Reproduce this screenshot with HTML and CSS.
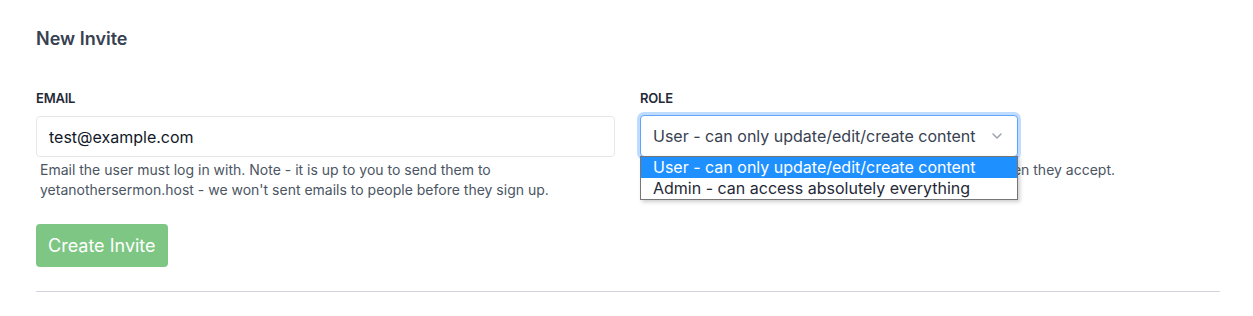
FILE: index.html
```html
<!DOCTYPE html>
<html lang="en">
<head>
  <meta charset="UTF-8">
  <meta name="viewport" content="width=device-width, initial-scale=1.0">
  <title>New Invite</title>
  <link rel="stylesheet" href="styles.css">
</head>
<body>
  <!-- Invite form -->
  <div class="panel">
    <h2 class="panel-title">New Invite</h2>
    <form class="invite-form">
      <div class="form-row">
        <div class="form-group">
          <label for="email">Email</label>
          <input type="email" id="email" name="email" value="test@example.com">
          <p class="help">Email the user must log in with. Note - it is up to you to send them to yetanothersermon.host - we won't sent emails to people before they sign up.</p>
        </div>
        <div class="form-group">
          <label for="role">Role</label>
          <div class="select-wrap">
            <div class="select focused" id="role">
              <span>User - can only update/edit/create content</span>
              <svg class="chevron" width="20" height="20" viewBox="0 0 20 20" fill="none" stroke="currentColor" stroke-width="1.5" stroke-linecap="round" stroke-linejoin="round"><path d="M6 8l4 4 4-4"/></svg>
            </div>
            <!-- open dropdown list -->
            <ul class="select-menu">
              <li class="selected">User - can only update/edit/create content</li>
              <li>Admin - can access absolutely everything</li>
            </ul>
          </div>
          <p class="help">What the user will be able to do, this applies to them when they accept.</p>
        </div>
      </div>
      <button type="button" class="btn-create" disabled>Create Invite</button>
    </form>
    <hr class="divider">
  </div>
</body>
</html>
```

FILE: styles.css
```css
* {
  margin: 0;
  padding: 0;
  box-sizing: border-box;
}
body {
  font-family: 'Inter', 'Noto Sans', sans-serif;
  background: #fff;
  color: #374151;
}
.panel {
  padding: 28px 33px 0 36px;
}
.panel-title {
  font-size: 18px;
  line-height: 22px;
  font-weight: 600;
  color: #374151;
  margin-bottom: 40px;
}
.form-row {
  display: grid;
  grid-template-columns: 579px 1fr;
  column-gap: 25px;
}
.form-group label {
  display: block;
  font-size: 13px;
  line-height: 16px;
  font-weight: 600;
  text-transform: uppercase;
  letter-spacing: -0.2px;
  color: #1f2937;
  margin-bottom: 10px;
}
.form-group input {
  width: 100%;
  height: 41px;
  padding: 0 12px;
  border: 1px solid #e5e7eb;
  border-radius: 4px;
  font-family: inherit;
  font-size: 16px;
  color: #111827;
}
.help {
  font-size: 14px;
  line-height: 20px;
  color: #4b5563;
  padding: 3px 4px 0;
}
.select-wrap {
  position: relative;
  width: 378px;
}
.select {
  display: flex;
  align-items: center;
  justify-content: space-between;
  height: 42px;
  margin-top: -1px;
  padding: 0 10px 0 12px;
  border: 1px solid #60a5fa;
  border-radius: 4px;
  font-size: 16px;
  color: #374151;
  background: #fff;
}
.select.focused {
  box-shadow: 0 0 0 3px #bfdbfe;
}
.chevron {
  color: #9ca3af;
}
.select-menu {
  position: absolute;
  top: 41px;
  left: 0;
  width: 378px;
  list-style: none;
  background: #fff;
  border: 1px solid #767676;
  box-shadow: 2px 2px 4px rgba(0,0,0,0.2);
  z-index: 2;
}
.select-menu li {
  font-size: 16px;
  line-height: 21px;
  padding: 0 12px;
  color: #1f2937;
}
.select-menu li.selected {
  background: #1e90ff;
  color: #fff;
}
.btn-create {
  margin-top: 24px;
  padding: 0 12px;
  height: 43px;
  background: #7ec683;
  color: #fff;
  border: none;
  border-radius: 4px;
  font-family: inherit;
  font-size: 18px;
}
.divider {
  margin-top: 24px;
  border: none;
  border-top: 1px solid #d1d5db;
}
```
